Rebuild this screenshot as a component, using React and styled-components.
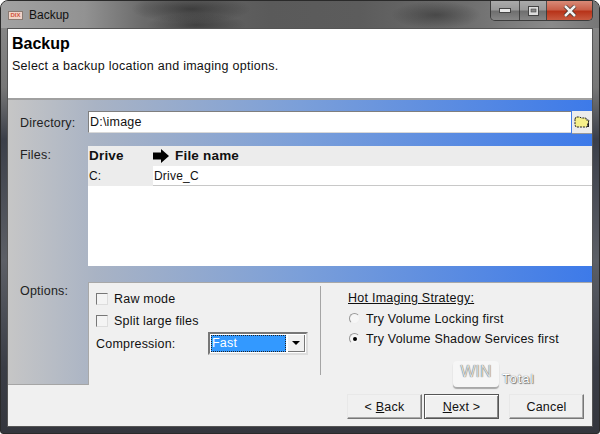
import React from "react";
import styled, { createGlobalStyle } from "styled-components";

const GlobalStyle = createGlobalStyle`
  html, body {
    margin: 0;
    padding: 0;
    background: #fff;
  }
  body {
    font-family: "Liberation Sans", Arial, sans-serif;
    font-size: 13px;
    color: #111;
  }
`;

const Window = styled.div`
  position: relative;
  width: 600px;
  height: 434px;
  overflow: hidden;
  display: flex;
  flex-direction: column;
  box-sizing: border-box;
  padding: 0 8px 6px;
  border: 1px solid #2a2a2a;
  border-radius: 8px 8px 3px 3px;
  background: linear-gradient(180deg, #8d8d8d 0%, #777 20%, #3b3f49 32%, #5c5f66 60%, #3a3d46 85%, #34363d 100%);
`;

const TitleBar = styled.div`
  height: 27px;
  margin: 0 -8px;
  display: flex;
  align-items: flex-start;
  background:
    radial-gradient(ellipse 60px 14px at 190px 8px, rgba(30, 30, 30, 0.55), transparent),
    radial-gradient(ellipse 50px 12px at 195px 24px, rgba(30, 30, 30, 0.5), transparent),
    radial-gradient(ellipse 45px 14px at 435px 14px, rgba(40, 40, 40, 0.5), transparent),
    linear-gradient(90deg, #a2a2a2 0%, #929292 14%, #6a6a6a 24%, #5a5a5a 45%, #5c5c5c 60%, #6e6e6e 78%, #8a8a8a 92%, #777 100%);
`;

const AppIcon = styled.div`
  width: 13px;
  height: 7px;
  margin: 10px 0 0 7px;
  background: #f0d4c8;
  border: 1px solid #8a7a72;
  color: #d0553c;
  font-size: 6px;
  line-height: 7px;
  text-align: center;
  font-weight: bold;
`;

const TitleText = styled.div`
  margin: 6px 0 0 6px;
  font-size: 12px;
  line-height: 16px;
  color: #111;
`;

const CaptionButtons = styled.div`
  margin-left: auto;
  margin-right: 6px;
  display: flex;
  height: 19px;
  border: 1px solid #3c3c3c;
  border-top: none;
  border-radius: 0 0 5px 5px;
  overflow: hidden;
`;

const CaptionButton = styled.div`
  width: ${(p) => p.$w}px;
  display: flex;
  align-items: center;
  justify-content: center;
  border-right: 1px solid rgba(40, 40, 40, 0.7);
  background: ${(p) =>
    p.$close
      ? "linear-gradient(180deg, #d88a78 0%, #c9604a 45%, #b8341a 55%, #c85a40 100%)"
      : "linear-gradient(180deg, #aaa 0%, #999 45%, #6f6f6f 55%, #868686 100%)"};
  &:last-child {
    border-right: none;
  }
`;

const Client = styled.div`
  flex: 1;
  display: flex;
  flex-direction: column;
  border: 1px solid #555;
  margin: 0 -2px;
  background: #f0f0f0;
  min-height: 0;
`;

const Header = styled.div`
  height: 71px;
  flex: none;
  box-sizing: border-box;
  padding: 5px 0 0 4px;
  background: #fff;
  border-bottom: 2px solid #a0a0a0;
`;

const Heading = styled.div`
  font-size: 16px;
  font-weight: bold;
  line-height: 20px;
  color: #000;
`;

const Subheading = styled.div`
  margin-top: 5px;
  font-size: 12.5px;
  line-height: 15px;
  letter-spacing: 0.27px;
`;

const Panel = styled.div`
  height: 285px;
  flex: none;
  box-sizing: border-box;
  padding-top: 11px;
  display: flex;
  flex-direction: column;
  background: linear-gradient(90deg, #c6c6c6 0%, #a9b3c4 15%, #7b9fd9 50%, #3d7ae9 100%);
  border-bottom: 1px solid #a5a5a5;
`;

const Row = styled.div`
  display: flex;
  align-items: flex-start;
  height: ${(p) => p.$h}px;
  margin-bottom: ${(p) => p.$mb || 0}px;
`;

const FieldLabel = styled.div`
  width: 80px;
  flex: none;
  box-sizing: border-box;
  padding: ${(p) => p.$top}px 0 0 12px;
  font-size: 12.5px;
  line-height: 15px;
  letter-spacing: 0.2px;
  color: #222;
`;

const DirectoryInput = styled.div`
  flex: 1;
  height: 22px;
  box-sizing: border-box;
  padding: 2px 0 0 1px;
  background: #fff;
  border-top: 1px solid #7f7f7f;
  border-left: 1px solid #7f7f7f;
  border-bottom: 1px solid #d8d8d8;
  font-size: 12.5px;
  line-height: 16px;
  letter-spacing: 0.2px;
`;

const FolderButton = styled.div`
  width: 20px;
  height: 22px;
  flex: none;
  display: flex;
  align-items: center;
  justify-content: center;
  background: #ececec;
  border-bottom: 1px solid #9a9a9a;
  margin-left: 1px;
`;

const FileList = styled.div`
  flex: 1;
  height: 100%;
  background: #fff;
  display: grid;
  grid-template-columns: 65px 1fr;
  grid-template-rows: 20px 20px 1fr;
`;

const HeadCell = styled.div`
  background: #ececec;
  display: flex;
  align-items: center;
  gap: 6px;
  padding: 0 0 1px ${(p) => p.$pl}px;
  font-size: 13.5px;
  font-weight: bold;
  letter-spacing: 0.2px;
  color: #111;
`;

const DriveCell = styled.div`
  background: #ececec;
  padding: 3px 0 0 1px;
  font-size: 12px;
  line-height: 15px;
`;

const NameCell = styled.div`
  background: #fff;
  padding: 3px 0 0 1px;
  font-size: 12px;
  line-height: 15px;
  letter-spacing: 0.2px;
  border-bottom: 1px solid #c8c8c8;
`;

const OptionsBox = styled.div`
  flex: 1;
  height: 100%;
  display: flex;
  background: #f0f0f0;
  border-left: 1px solid #a8a8a8;
  border-top: 1px solid #a8a8a8;
`;

const LeftOptions = styled.div`
  width: 231px;
  flex: none;
  box-sizing: border-box;
  padding: 8px 0 0 7px;
  display: flex;
  flex-direction: column;
  gap: 7px;
`;

const Divider = styled.div`
  width: 1px;
  height: 89px;
  margin-top: 3px;
  background: #a5a5a5;
`;

const RightOptions = styled.div`
  padding: 8px 0 0 27px;
  display: flex;
  flex-direction: column;
  gap: 5px;
`;

const OptionRow = styled.div`
  display: flex;
  align-items: center;
  height: 15px;
  font-size: 12.5px;
  letter-spacing: 0.2px;
`;

const Checkbox = styled.span`
  width: 10px;
  height: 10px;
  margin-right: 6px;
  background: #f4f4f4;
  border: 1px solid #777;
  border-right-color: #ddd;
  border-bottom-color: #ddd;
`;

const CompressionRow = styled.div`
  display: flex;
  align-items: center;
  height: 23px;
  margin-top: -3px;
  font-size: 12.5px;
  letter-spacing: 0.2px;
`;

const CompressionLabel = styled.span`
  width: 112px;
`;

const Select = styled.div`
  width: 100px;
  height: 23px;
  box-sizing: border-box;
  display: flex;
  background: #fff;
  border: 2px solid #777;
  border-right-color: #ddd;
  border-bottom-color: #ddd;
  padding: 1px;
`;

const SelectValue = styled.div`
  flex: 1;
  background: #3399ff;
  color: #fff;
  outline: 1px dotted #222;
  outline-offset: -1px;
  padding-left: 1px;
  font-size: 12.5px;
  line-height: 16px;
`;

const SelectArrow = styled.div`
  width: 16px;
  margin-left: 2px;
  display: flex;
  align-items: center;
  justify-content: center;
  background: #f0f0f0;
  border-right: 1px solid #777;
  border-bottom: 1px solid #777;
  &::after {
    content: "";
    border: 4px solid transparent;
    border-top: 4px solid #000;
    border-bottom: none;
  }
`;

const StrategyTitle = styled.div`
  font-size: 12.5px;
  line-height: 14px;
  margin-bottom: 1px;
  text-decoration: underline;
  letter-spacing: 0.25px;
`;

const Radio = styled.span`
  position: relative;
  width: 11px;
  height: 11px;
  margin: 0 6px 0 1px;
  border-radius: 50%;
  background: #f6f6f6;
  border: 1px solid #999;
  border-right-color: #eee;
  border-bottom-color: #eee;
  box-sizing: border-box;
  &::after {
    content: "";
    display: ${(p) => (p.$on ? "block" : "none")};
    position: absolute;
    left: 2.5px;
    top: 2.5px;
    width: 4px;
    height: 4px;
    border-radius: 50%;
    background: #000;
  }
`;

const Footer = styled.div`
  flex: 1;
  display: flex;
  justify-content: flex-end;
  align-items: flex-start;
  padding: 9px 8px 0 0;
`;

const FooterButton = styled.div`
  width: 75px;
  height: 25px;
  margin-left: ${(p) => p.$ml || 0}px;
  box-sizing: border-box;
  display: flex;
  align-items: center;
  justify-content: center;
  background: #f0f0f0;
  font-size: 12.5px;
  letter-spacing: 0.2px;
  border: 1px solid;
  border-color: ${(p) => (p.$active ? "#555" : "#e8e8e8 #777 #777 #e8e8e8")};
  box-shadow: ${(p) => (p.$active ? "inset 1px 1px 0 #fff, inset -1px -1px 0 #888" : "inset -1px -1px 0 #aaa")};
`;

const Watermark = styled.div`
  position: absolute;
  left: 452px;
  top: 358px;
  height: 30px;
  display: flex;
  align-items: center;
  gap: 3px;
  font-size: 13px;
  letter-spacing: 1px;
  color: #fff;
  text-shadow: 0 0 1px #444, 1px 1px 1px #777;
`;

const WatermarkWin = styled.span`
  width: 46px;
  height: 26px;
  box-sizing: border-box;
  padding-top: 2px;
  text-align: center;
  font-size: 16px;
  letter-spacing: 0;
  background: rgba(255, 255, 255, 0.4);
  border-radius: 4px;
  color: #ddd;
  text-shadow: 0 0 1px #333;
  box-shadow: 0 2px 1px rgba(120, 120, 120, 0.6);
`;

const TotalMark = styled.span`
  padding-top: 8px;
`;

const FolderIcon = () => (
  <svg width="16" height="14" viewBox="0 0 16 14">
    <path d="M1 4 L2 2 H6 L7 3 H12 V5 H15 L13 12 H2 L1 10 Z" fill="#f6f08a" stroke="#222" strokeWidth="1" strokeDasharray="2 1" />
    <path d="M13 12 L15 5 V12 Z" fill="#222" />
  </svg>
);

const ArrowIcon = () => (
  <svg width="16" height="14" viewBox="0 0 16 14">
    <path d="M0 3.5 H8 V0 L16 7 L8 14 V10.5 H0 Z" fill="#000" />
  </svg>
);

const App = () => {
  return (
    <>
      <GlobalStyle />
      <Window>
        <TitleBar>
          <AppIcon>DIX</AppIcon>
          <TitleText>Backup</TitleText>
          <CaptionButtons>
            <CaptionButton $w={28}>
              <svg width="12" height="5" viewBox="0 0 12 5">
                <rect x="0.5" y="0.5" width="11" height="4" fill="#e8e8e8" stroke="#444" />
              </svg>
            </CaptionButton>
            <CaptionButton $w={26}>
              <svg width="11" height="10" viewBox="0 0 11 10">
                <rect x="0.5" y="0.5" width="10" height="9" fill="#ddd" stroke="#444" />
                <rect x="3" y="3" width="5" height="3" fill="#888" stroke="#444" strokeWidth="0.6" />
              </svg>
            </CaptionButton>
            <CaptionButton $w={45} $close>
              <svg width="14" height="12" viewBox="0 0 14 12">
                <path d="M2 1 L12 11 M12 1 L2 11" stroke="#3a2a26" strokeWidth="4" />
                <path d="M2 1 L12 11 M12 1 L2 11" stroke="#f2f2f2" strokeWidth="2.6" />
              </svg>
            </CaptionButton>
          </CaptionButtons>
        </TitleBar>
        <Client>
          <Header>
            <Heading>Backup</Heading>
            <Subheading>Select a backup location and imaging options.</Subheading>
          </Header>
          <Panel>
            <Row $h={22} $mb={13}>
              <FieldLabel $top={5}>Directory:</FieldLabel>
              <DirectoryInput>D:\image</DirectoryInput>
              <FolderButton>
                <FolderIcon />
              </FolderButton>
            </Row>
            <Row $h={120} $mb={16}>
              <FieldLabel $top={2}>Files:</FieldLabel>
              <FileList>
                <HeadCell $pl={1}>Drive</HeadCell>
                <HeadCell $pl={0}>
                  <ArrowIcon />
                  File name
                </HeadCell>
                <DriveCell>C:</DriveCell>
                <NameCell>Drive_C</NameCell>
              </FileList>
            </Row>
            <Row $h={102}>
              <FieldLabel $top={2}>Options:</FieldLabel>
              <OptionsBox>
                <LeftOptions>
                  <OptionRow>
                    <Checkbox />
                    Raw mode
                  </OptionRow>
                  <OptionRow>
                    <Checkbox />
                    Split large files
                  </OptionRow>
                  <CompressionRow>
                    <CompressionLabel>Compression:</CompressionLabel>
                    <Select>
                      <SelectValue>Fast</SelectValue>
                      <SelectArrow />
                    </Select>
                  </CompressionRow>
                </LeftOptions>
                <Divider />
                <RightOptions>
                  <StrategyTitle>Hot Imaging Strategy:</StrategyTitle>
                  <OptionRow>
                    <Radio />
                    Try Volume Locking first
                  </OptionRow>
                  <OptionRow>
                    <Radio $on />
                    Try Volume Shadow Services first
                  </OptionRow>
                </RightOptions>
              </OptionsBox>
            </Row>
          </Panel>
          <Footer>
            <FooterButton>
              <span>
                &lt; <u>B</u>ack
              </span>
            </FooterButton>
            <FooterButton $active $ml={2}>
              <span>
                <u>N</u>ext &gt;
              </span>
            </FooterButton>
            <FooterButton $ml={10}>Cancel</FooterButton>
          </Footer>
        </Client>
        <Watermark>
          <WatermarkWin>WIN</WatermarkWin>
          <TotalMark>Total</TotalMark>
        </Watermark>
      </Window>
    </>
  );
};

export default App;
